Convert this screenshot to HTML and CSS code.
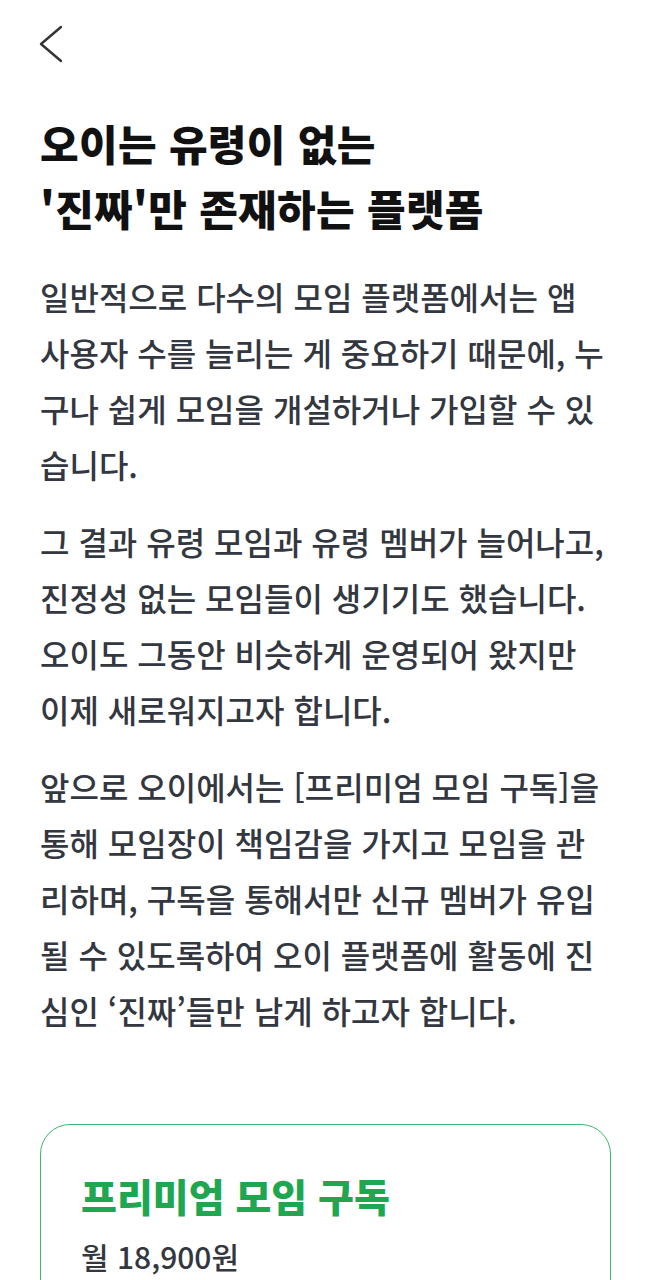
FILE: index.html
```html
<!DOCTYPE html>
<html lang="ko">
<head>
    <meta charset="UTF-8">
    <meta name="viewport" content="width=device-width, initial-scale=1.0">
    <title>프리미엄 모임 구독</title>
    <link rel="stylesheet" href="styles.css">
</head>
<body>
    <header class="top-bar">
        <button class="back-button" aria-label="뒤로">
            <svg width="26" height="40" viewBox="0 0 26 40">
                <path d="M23 3 L3 20 L23 37" fill="none" stroke="#333" stroke-width="2.4" stroke-linecap="round" stroke-linejoin="round"/>
            </svg>
        </button>
    </header>

    <main class="content">
        <h1 class="title">오이는 유령이 없는<br>'진짜'만 존재하는 플랫폼</h1>

        <p class="body-text">일반적으로 다수의 모임 플랫폼에서는 앱<br>사용자 수를 늘리는 게 중요하기 때문에, 누<br>구나 쉽게 모임을 개설하거나 가입할 수 있<br>습니다.</p>

        <p class="body-text">그 결과 유령 모임과 유령 멤버가 늘어나고,<br>진정성 없는 모임들이 생기기도 했습니다.<br>오이도 그동안 비슷하게 운영되어 왔지만<br>이제 새로워지고자 합니다.</p>

        <p class="body-text">앞으로 오이에서는 [프리미엄 모임 구독]을<br>통해 모임장이 책임감을 가지고 모임을 관<br>리하며, 구독을 통해서만 신규 멤버가 유입<br>될 수 있도록하여 오이 플랫폼에 활동에 진<br>심인 ‘진짜’들만 남게 하고자 합니다.</p>

        <section class="plan-card">
            <h2 class="plan-name">프리미엄 모임 구독</h2>
            <p class="plan-price">월 18,900원</p>
        </section>
    </main>
</body>
</html>
```

FILE: styles.css
```css
body {
    margin: 0;
    padding: 0;
    background-color: #fff;
    font-family: "Noto Sans CJK KR", "Noto Sans", sans-serif;
    color: #222;
}

.top-bar {
    height: 90px;
    padding: 24px 0 0 38px;
    box-sizing: border-box;
}

.back-button {
    padding: 0;
    margin: 0;
    border: none;
    background: none;
    cursor: pointer;
}

.content {
    padding: 0 40px;
}

.title {
    margin: 20px 0 0;
    font-size: 42px;
    font-weight: 900;
    line-height: 65px;
    letter-spacing: 0.3px;
    color: #111;
}

.body-text {
    margin: 28px 0 0;
    font-size: 32px;
    font-weight: 500;
    line-height: 56px;
    color: #33373f;
}

.body-text + .body-text {
    margin-top: 21px;
}

.plan-card {
    margin-top: 86px;
    padding: 42px 40px 40px;
    border: 1.5px solid #3cb96d;
    border-radius: 30px;
}

.plan-name {
    margin: 0;
    font-size: 39px;
    font-weight: 900;
    line-height: 56px;
    color: #1ea750;
}

.plan-price {
    margin: 13px 0 0;
    font-size: 30px;
    font-weight: 500;
    line-height: 40px;
    color: #33373f;
}
```
